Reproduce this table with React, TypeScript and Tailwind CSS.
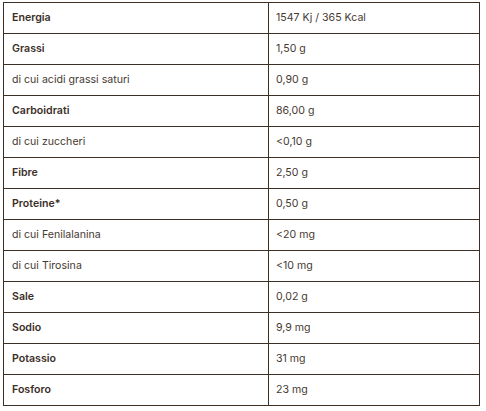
const rows: [string, string, boolean][] = [
  ["Energia", "1547 Kj / 365 Kcal", true],
  ["Grassi", "1,50 g", true],
  ["di cui acidi grassi saturi", "0,90 g", false],
  ["Carboidrati", "86,00 g", true],
  ["di cui zuccheri", "<0,10 g", false],
  ["Fibre", "2,50 g", true],
  ["Proteine*", "0,50 g", true],
  ["di cui Fenilalanina", "<20 mg", false],
  ["di cui Tirosina", "<10 mg", false],
  ["Sale", "0,02 g", true],
  ["Sodio", "9,9 mg", true],
  ["Potassio", "31 mg", true],
  ["Fosforo", "23 mg", true],
];

export default function App() {
  return (
    <div className="min-h-screen bg-white pl-[3px] pt-[2px] font-['Inter',sans-serif] text-[10.6px] text-[#463a32]">
      <table className="w-[477px] border-collapse border border-[#3b2f26]">
        <tbody>
          {rows.map(([label, value, bold]) => (
            <tr key={label} className="h-[31px]">
              <td
                className={
                  bold
                    ? "w-[265px] border border-[#3b2f26] px-[8px] font-semibold text-[#3b2f28]"
                    : "w-[265px] border border-[#3b2f26] px-[8px]"
                }
              >
                {label}
              </td>
              <td className="border border-[#3b2f26] px-[7px]">{value}</td>
            </tr>
          ))}
        </tbody>
      </table>
    </div>
  );
}
